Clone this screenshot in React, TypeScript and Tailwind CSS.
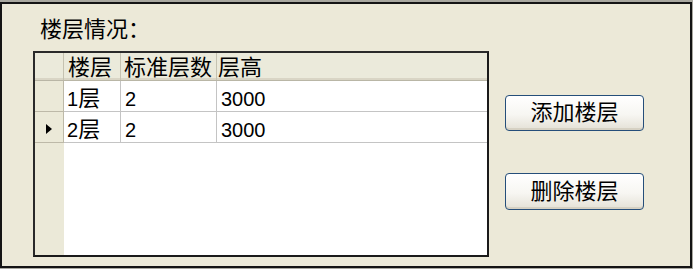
import React from "react";

function Cjk({ children }: { children: React.ReactNode }) {
  return <span className="text-[22px]">{children}</span>;
}

function Arrow() {
  return (
    <svg width="6" height="10" viewBox="0 0 6 10" className="block">
      <polygon points="0,0 6,5 0,10" fill="#000" />
    </svg>
  );
}

type Row = { name: string; std: string; h: string; current?: boolean };

const rows: Row[] = [
  { name: "1", std: "2", h: "3000" },
  { name: "2", std: "2", h: "3000", current: true },
];

export default function App() {
  return (
    <div className="w-[693px] h-[269px] bg-[#a9a8a0] pt-[2px] font-['Liberation_Sans','Noto_Sans_CJK_SC',sans-serif] text-black text-[20px]">
      <div className="w-[692px] h-[266px] border-2 border-[#141414] bg-[#ece9d8] flex flex-col">
        <div className="pl-[38px] pt-[14px] h-[47px] leading-[24px]">
          <Cjk>楼层情况：</Cjk>
        </div>
        <div className="flex">
          <div className="ml-[31px] w-[456px] h-[206px] border-2 border-t-[#2a2a2a] border-l-[#2a2a2a] border-r-[#1a1a1a] border-b-[#1a1a1a] bg-white flex flex-col">
            {/* header */}
            <div className="flex h-[28px] bg-[#ebeadb] border-b border-[#b9b6a6] shadow-[inset_0_-2px_0_#d9d5c5] leading-[24px]">
              <div className="w-[29px] border-r border-[#c5c2b1]" />
              <div className="w-[57px] border-r border-[#c5c2b1] pl-[4px] pt-[3px]">
                <Cjk>楼层</Cjk>
              </div>
              <div className="w-[96px] border-r border-[#c5c2b1] pl-[3px] pt-[3px] whitespace-nowrap">
                <Cjk>标准层数</Cjk>
              </div>
              <div className="flex-1 pl-[1px] pt-[3px]">
                <Cjk>层高</Cjk>
              </div>
            </div>
            {rows.map((r) => (
              <div key={r.name} className="flex h-[31px] leading-[24px]">
                <div className="w-[29px] bg-[#ebe9d8] border-r border-b border-[#bdb9a8] pl-[11px] pt-[12px]">
                  {r.current ? <Arrow /> : null}
                </div>
                <div className="w-[57px] border-r border-b border-[#c4c4c4] pl-[3px] pt-[6px] whitespace-nowrap">
                  <span>{r.name}</span>
                  <Cjk>层</Cjk>
                </div>
                <div className="w-[96px] border-r border-b border-[#c4c4c4] pl-[4px] pt-[6px]">
                  {r.std}
                </div>
                <div className="flex-1 border-b border-[#c4c4c4] pl-[4px] pt-[6px]">{r.h}</div>
              </div>
            ))}
            <div className="flex flex-1">
              <div className="w-[29px] bg-[#ebe9d8]" />
              <div className="flex-1 bg-white" />
            </div>
          </div>
          <div className="ml-[16px] flex flex-col">
            <button className="mt-[44px] w-[139px] h-[36px] rounded-[4px] border border-[#254e7a] bg-[linear-gradient(180deg,#ffffff_0%,#f7f6f2_55%,#e4e1d6_100%)] shadow-[inset_0_-2px_0_#d6d1c3] flex items-center justify-center leading-[24px]">
              <Cjk>添加楼层</Cjk>
            </button>
            <button className="mt-[42px] w-[139px] h-[37px] rounded-[4px] border border-[#254e7a] bg-[linear-gradient(180deg,#ffffff_0%,#f7f6f2_55%,#e4e1d6_100%)] shadow-[inset_0_-2px_0_#d6d1c3] flex items-center justify-center leading-[24px]">
              <Cjk>删除楼层</Cjk>
            </button>
          </div>
        </div>
      </div>
    </div>
  );
}
